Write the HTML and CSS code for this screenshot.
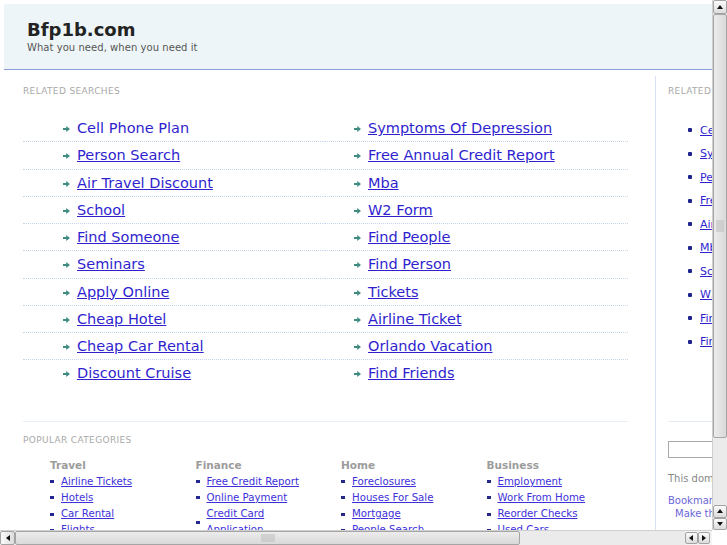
FILE: index.html
```html
<!DOCTYPE html>
<html>
<head>
<meta charset="utf-8">
<title>Bfp1b.com</title>
<link rel="stylesheet" href="styles.css">
</head>
<body>
<div class="page">
  <header class="top">
    <h1 class="title">Bfp1b.com</h1>
    <p class="tagline">What you need, when you need it</p>
  </header>
  <div class="main">
    <section class="left">
      <h2 class="label">Related Searches</h2>
      <ul class="rs">
        <li><svg class="arr" viewBox="0 0 7 6"><path d="M0 2h3.2V0L7 3 3.2 6V4H0z"/></svg><a class="plain" href="#">Cell Phone Plan</a></li>
        <li><svg class="arr" viewBox="0 0 7 6"><path d="M0 2h3.2V0L7 3 3.2 6V4H0z"/></svg><a href="#">Symptoms Of Depression</a></li>
        <li><svg class="arr" viewBox="0 0 7 6"><path d="M0 2h3.2V0L7 3 3.2 6V4H0z"/></svg><a href="#">Person Search</a></li>
        <li><svg class="arr" viewBox="0 0 7 6"><path d="M0 2h3.2V0L7 3 3.2 6V4H0z"/></svg><a href="#">Free Annual Credit Report</a></li>
        <li><svg class="arr" viewBox="0 0 7 6"><path d="M0 2h3.2V0L7 3 3.2 6V4H0z"/></svg><a href="#">Air Travel Discount</a></li>
        <li><svg class="arr" viewBox="0 0 7 6"><path d="M0 2h3.2V0L7 3 3.2 6V4H0z"/></svg><a href="#">Mba</a></li>
        <li><svg class="arr" viewBox="0 0 7 6"><path d="M0 2h3.2V0L7 3 3.2 6V4H0z"/></svg><a href="#">School</a></li>
        <li><svg class="arr" viewBox="0 0 7 6"><path d="M0 2h3.2V0L7 3 3.2 6V4H0z"/></svg><a href="#">W2 Form</a></li>
        <li><svg class="arr" viewBox="0 0 7 6"><path d="M0 2h3.2V0L7 3 3.2 6V4H0z"/></svg><a href="#">Find Someone</a></li>
        <li><svg class="arr" viewBox="0 0 7 6"><path d="M0 2h3.2V0L7 3 3.2 6V4H0z"/></svg><a href="#">Find People</a></li>
        <li><svg class="arr" viewBox="0 0 7 6"><path d="M0 2h3.2V0L7 3 3.2 6V4H0z"/></svg><a href="#">Seminars</a></li>
        <li><svg class="arr" viewBox="0 0 7 6"><path d="M0 2h3.2V0L7 3 3.2 6V4H0z"/></svg><a href="#">Find Person</a></li>
        <li><svg class="arr" viewBox="0 0 7 6"><path d="M0 2h3.2V0L7 3 3.2 6V4H0z"/></svg><a href="#">Apply Online</a></li>
        <li><svg class="arr" viewBox="0 0 7 6"><path d="M0 2h3.2V0L7 3 3.2 6V4H0z"/></svg><a href="#">Tickets</a></li>
        <li><svg class="arr" viewBox="0 0 7 6"><path d="M0 2h3.2V0L7 3 3.2 6V4H0z"/></svg><a href="#">Cheap Hotel</a></li>
        <li><svg class="arr" viewBox="0 0 7 6"><path d="M0 2h3.2V0L7 3 3.2 6V4H0z"/></svg><a href="#">Airline Ticket</a></li>
        <li><svg class="arr" viewBox="0 0 7 6"><path d="M0 2h3.2V0L7 3 3.2 6V4H0z"/></svg><a href="#">Cheap Car Rental</a></li>
        <li><svg class="arr" viewBox="0 0 7 6"><path d="M0 2h3.2V0L7 3 3.2 6V4H0z"/></svg><a href="#">Orlando Vacation</a></li>
        <li><svg class="arr" viewBox="0 0 7 6"><path d="M0 2h3.2V0L7 3 3.2 6V4H0z"/></svg><a href="#">Discount Cruise</a></li>
        <li><svg class="arr" viewBox="0 0 7 6"><path d="M0 2h3.2V0L7 3 3.2 6V4H0z"/></svg><a href="#">Find Friends</a></li>
      </ul>
      <div class="divider"></div>
      <h2 class="label label-pop">Popular Categories</h2>
      <div class="cats">
        <div class="cat">
          <h3>Travel</h3>
          <ul>
            <li><a href="#">Airline Tickets</a></li>
            <li><a href="#">Hotels</a></li>
            <li><a href="#">Car Rental</a></li>
            <li><a href="#">Flights</a></li>
          </ul>
        </div>
        <div class="cat">
          <h3>Finance</h3>
          <ul>
            <li><a href="#">Free Credit Report</a></li>
            <li><a href="#">Online Payment</a></li>
            <li><a href="#">Credit Card Application</a></li>
            <li><a href="#">Insurance</a></li>
          </ul>
        </div>
        <div class="cat">
          <h3>Home</h3>
          <ul>
            <li><a href="#">Foreclosures</a></li>
            <li><a href="#">Houses For Sale</a></li>
            <li><a href="#">Mortgage</a></li>
            <li><a href="#">People Search</a></li>
          </ul>
        </div>
        <div class="cat">
          <h3>Business</h3>
          <ul>
            <li><a href="#">Employment</a></li>
            <li><a href="#">Work From Home</a></li>
            <li><a href="#">Reorder Checks</a></li>
            <li><a href="#">Used Cars</a></li>
          </ul>
        </div>
      </div>
    </section>
    <aside class="side">
      <h2 class="label">Related Searches</h2>
      <ul class="side-list">
        <li><a href="#">Cell Phone Plan</a></li>
        <li><a href="#">Symptoms Of Depression</a></li>
        <li><a href="#">Person Search</a></li>
        <li><a href="#">Free Annual Credit Report</a></li>
        <li><a href="#">Air Travel Discount</a></li>
        <li><a href="#">Mba</a></li>
        <li><a href="#">School</a></li>
        <li><a href="#">W2 Form</a></li>
        <li><a href="#">Find Someone</a></li>
        <li><a href="#">Find People</a></li>
      </ul>
      <div class="side-divider"></div>
      <input class="search" type="text">
      <p class="note">This domain may be for sale</p>
      <a class="bm" href="#">Bookmark this page</a>
      <a class="bm bm-home" href="#">Make this your homepage</a>
    </aside>
  </div>
</div>

<div class="vbar">
  <div class="sbtn"><span class="tri tri-up"></span></div>
  <div class="vthumb"><span class="grip grip-v"></span></div>
  <div class="vtrack"></div>
  <div class="sbtn sbtn-s"><span class="tri tri-up"></span></div>
  <div class="sbtn sbtn-s"><span class="tri tri-down"></span></div>
</div>
<div class="hbar">
  <div class="sbtn sbtn-h"><span class="tri tri-left"></span></div>
  <div class="hthumb"><span class="grip grip-h"></span></div>
  <div class="htrack"></div>
  <div class="sbtn sbtn-hs"><span class="tri tri-left"></span></div>
  <div class="sbtn sbtn-hs"><span class="tri tri-right"></span></div>
  <div class="hpad"></div>
</div>
<div class="corner"></div>
</body>
</html>
```

FILE: styles.css
```css
html, body {
  overflow: hidden;
}
body {
  margin: 0;
  background: #fff;
  font-family: "DejaVu Sans", "Bitstream Vera Sans", Verdana, sans-serif;
}
a {
  color: #2f1fcf;
}
.page {
  margin: 4px 0 0 4px;
  width: 1000px;
}

/* header */
.top {
  box-sizing: border-box;
  height: 66px;
  padding: 14.5px 0 0 23px;
  background: #eef5f8;
  border-bottom: 1px solid #8d9fdc;
}
.title {
  margin: 0;
  font-size: 18px;
  line-height: 22px;
  font-weight: 700;
  color: #232323;
}
.tagline {
  margin: 0;
  font-size: 10px;
  line-height: 13px;
  letter-spacing: 0.05px;
  color: #555;
}

/* main */
.main {
  display: flex;
  align-items: stretch;
}
.left {
  margin-left: 19px;
  width: 605px;
  padding-top: 16px;
  flex: none;
}
.label {
  margin: 0;
  font-size: 9px;
  line-height: 11px;
  font-weight: normal;
  text-transform: uppercase;
  letter-spacing: 0.35px;
  color: #a9a9a9;
  white-space: nowrap;
}
.rs {
  list-style: none;
  margin: 18px 0 0;
  padding: 0;
  display: grid;
  grid-template-columns: 302px 303px;
}
.rs li {
  height: 26.25px;
  border-bottom: 1px dotted #c5d5ee;
  display: flex;
  align-items: center;
  gap: 7px;
  font-size: 14.5px;
  white-space: nowrap;
}
.rs li:nth-child(odd) {
  padding-left: 40px;
}
.rs li:nth-child(even) {
  padding-left: 29px;
}
.rs li:nth-last-child(-n+2) {
  border-bottom: none;
}
.arr {
  width: 7px;
  height: 6px;
  flex: none;
  fill: #3f8c82;
  margin-top: 2px;
}
.plain {
  text-decoration: none;
}
.divider {
  margin-top: 34.5px;
  border-top: 1px solid #e8eef7;
}
.label-pop {
  margin-top: 13px;
}
.cats {
  display: grid;
  grid-template-columns: repeat(4, 145.5px);
  padding-left: 27px;
  margin-top: 12.5px;
}
.cat h3 {
  margin: 0;
  font-size: 10.5px;
  line-height: 13px;
  font-weight: 700;
  color: #9c9c9c;
}
.cat ul {
  list-style: none;
  margin: 2px 0 0;
  padding: 0;
}
.cat li {
  display: flex;
  align-items: center;
  gap: 7px;
  font-size: 10.2px;
  line-height: 16.3px;
}
.cat li::before {
  content: "";
  width: 4px;
  height: 3px;
  background: #24288f;
  flex: none;
}
.cat li a {
  max-width: 106px;
  color: #3d30da;
}

/* side column */
.side {
  flex: none;
  width: 260px;
  margin: 6px 0 0 27px;
  padding: 10px 0 0 12px;
  border-left: 1px solid #d7e0f0;
  height: 600px;
}
.side-list {
  list-style: none;
  margin: 21.25px 0 0;
  padding: 0 0 0 20px;
}
.side-list li {
  display: flex;
  align-items: center;
  gap: 8px;
  height: 23.5px;
  font-size: 11px;
  white-space: nowrap;
}
.side-list li::before {
  content: "";
  width: 4px;
  height: 4px;
  border-radius: 1px;
  background: #1f238e;
  flex: none;
}
.side-divider {
  margin-top: 67.75px;
  border-top: 1px solid #e6ecf5;
}
.search {
  display: block;
  box-sizing: border-box;
  margin: 18.5px 0 0;
  width: 200px;
  height: 17px;
  border: 1px solid #a9a9a9;
  padding: 0;
  background: #fff;
}
.note {
  margin: 14px 0 0;
  font-size: 10px;
  line-height: 13px;
  color: #888;
  white-space: nowrap;
}
.bm {
  display: block;
  margin-top: 9.5px;
  font-size: 10px;
  line-height: 13px;
  color: #6a66d8;
  text-decoration: none;
  white-space: nowrap;
}
.bm-home {
  margin-top: 0;
  padding-left: 7px;
}

/* fake scrollbars (overlay the viewport edges) */
.vbar {
  position: fixed;
  top: 0;
  right: 0;
  width: 15px;
  height: 530px;
  display: flex;
  flex-direction: column;
  background: #f3f3f3;
  border-left: 1px solid #d0d0d0;
  box-sizing: border-box;
}
.hbar {
  position: fixed;
  left: 0;
  bottom: 0;
  width: 712px;
  height: 15px;
  display: flex;
  background: #f3f3f3;
  border-top: 1px solid #d0d0d0;
  box-sizing: border-box;
}
.corner {
  position: fixed;
  right: 0;
  bottom: 0;
  width: 15px;
  height: 15px;
  background: #fff;
}
.sbtn {
  box-sizing: border-box;
  height: 14px;
  flex: none;
  display: flex;
  align-items: center;
  justify-content: center;
  background: linear-gradient(#fbfbfb, #dcdcdc);
  border: 1px solid #a3a3a3;
  border-radius: 2px;
}
.sbtn-s {
  height: 12.5px;
}
.sbtn-h {
  width: 15px;
  height: auto;
  background: linear-gradient(90deg, #fbfbfb, #dcdcdc);
}
.sbtn-hs {
  width: 12.5px;
  height: 12px;
  margin-top: 1px;
  background: linear-gradient(#fbfbfb, #dcdcdc);
}
.hpad {
  width: 2px;
  flex: none;
}
.vthumb {
  box-sizing: border-box;
  height: 424px;
  flex: none;
  display: flex;
  align-items: center;
  justify-content: center;
  background: linear-gradient(90deg, #ececec, #d9d9d9);
  border: 1px solid #a5a5a5;
  border-radius: 2px;
}
.hthumb {
  box-sizing: border-box;
  width: 505px;
  flex: none;
  display: flex;
  align-items: center;
  justify-content: center;
  background: linear-gradient(#ececec, #d9d9d9);
  border: 1px solid #a5a5a5;
  border-radius: 2px;
}
.vtrack, .htrack {
  flex: 1;
  background-color: #f5f5f5;
  background-image: radial-gradient(circle, #dedede 0.6px, transparent 0.8px);
  background-size: 2px 2px;
}
.grip {
  display: block;
  background-image: radial-gradient(circle, #b8b8b8 0.6px, transparent 0.8px);
  background-size: 2px 2px;
}
.grip-v {
  width: 8px;
  height: 12px;
}
.grip-h {
  width: 14px;
  height: 8px;
}
.tri {
  width: 0;
  height: 0;
  display: block;
}
.tri-up {
  border-left: 3.5px solid transparent;
  border-right: 3.5px solid transparent;
  border-bottom: 4px solid #111;
}
.tri-down {
  border-left: 3.5px solid transparent;
  border-right: 3.5px solid transparent;
  border-top: 4px solid #111;
}
.tri-left {
  border-top: 3.5px solid transparent;
  border-bottom: 3.5px solid transparent;
  border-right: 4px solid #111;
}
.tri-right {
  border-top: 3.5px solid transparent;
  border-bottom: 3.5px solid transparent;
  border-left: 4px solid #111;
}
```
